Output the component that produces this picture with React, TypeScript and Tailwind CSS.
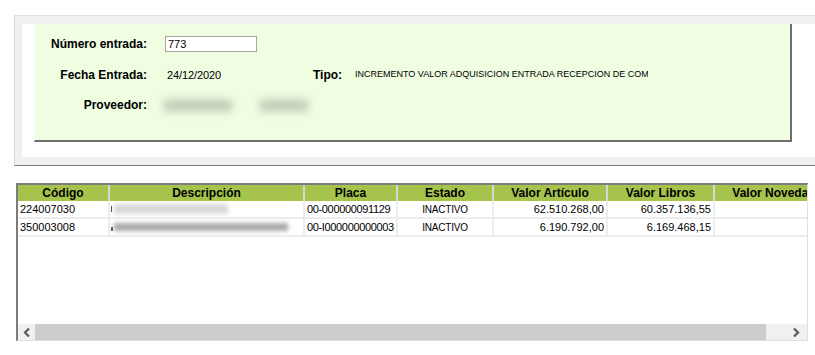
import React from "react";

const cols = [
  { w: "w-[90px]", label: "Código" },
  { w: "w-[195px]", label: "Descripción" },
  { w: "w-[93px]", label: "Placa" },
  { w: "w-[96px]", label: "Estado" },
  { w: "w-[114px]", label: "Valor Artículo" },
  { w: "w-[107px]", label: "Valor Libros" },
  { w: "w-[120px]", label: "Valor Novedad" },
];

function Chevron({ dir }: { dir: "l" | "r" }) {
  return (
    <svg width="8" height="9" viewBox="0 0 8 9">
      {dir === "l" ? (
        <path d="M6 0.5 L2 4.5 L6 8.5" fill="none" stroke="#5a5a5a" strokeWidth="2.2" />
      ) : (
        <path d="M2 0.5 L6 4.5 L2 8.5" fill="none" stroke="#5a5a5a" strokeWidth="2.2" />
      )}
    </svg>
  );
}

function Row({
  code,
  desc,
  placa,
  estado,
  va,
  vl,
}: {
  code: string;
  desc: React.ReactNode;
  placa: string;
  estado: string;
  va: string;
  vl: string;
}) {
  return (
    <div className="flex h-[18px] border-b-2 border-[#ececec] text-[11px] leading-[16px] text-black whitespace-nowrap">
      <div className="w-[90px] shrink-0 pl-[2px]">{code}</div>
      <div className="w-[195px] shrink-0 border-l-2 border-[#ececec] relative overflow-hidden">{desc}</div>
      <div className="w-[93px] shrink-0 border-l-2 border-[#ececec] pl-[2px] tracking-[-0.35px]">{placa}</div>
      <div className="w-[96px] shrink-0 border-l-2 border-[#ececec] text-center text-[10px] leading-[16px] pt-[1px] tracking-[-0.2px]">{estado}</div>
      <div className="w-[114px] shrink-0 border-l-2 border-[#ececec] text-right pr-[2px]">{va}</div>
      <div className="w-[107px] shrink-0 border-l-2 border-[#ececec] text-right pr-[2px]">{vl}</div>
      <div className="w-[120px] shrink-0 border-l-2 border-[#ececec]"></div>
    </div>
  );
}

export default function App() {
  return (
    <div className="w-[815px] h-[355px] bg-white overflow-hidden font-['Liberation_Sans',Arial,sans-serif] text-black">
      {/* top outer panel */}
      <div className="pt-[15px] pl-[14px]">
        <div className="w-[801px] h-[151px] border-t border-[#e2e2e2] border-l border-l-[#d8d8d8] border-b border-b-[#7a7a7a] bg-[#f0f0f0] pt-[8px] pb-[8px] pl-[7px] flex flex-col">
          <div className="flex-1 bg-white pl-[12px]">
            <div className="w-[758px] h-[118px] bg-[#effde1] border-r-2 border-b-2 border-[#6e6e6e] border-l border-l-[#f6fbf2] pt-[12px]">
              {/* row 1 */}
              <div className="flex items-center h-[16px]">
                <div className="w-[112px] text-right text-[12px] font-bold">Número entrada:</div>
                <div className="ml-[18px] w-[92px] h-[16px] bg-white border border-[#a8a8a8] text-[11px] leading-[14px] pl-[2px]">
                  773
                </div>
              </div>
              {/* row 2 */}
              <div className="flex items-center h-[16px] mt-[15px]">
                <div className="w-[112px] text-right text-[12px] font-bold">Fecha Entrada:</div>
                <div className="ml-[20px] w-[146px] text-[11px] tracking-[-0.1px]">24/12/2020</div>
                <div className="w-[42px] text-[12px] font-bold">Tipo:</div>
                <div className="w-[293px] overflow-hidden whitespace-nowrap text-[9px]">
                  INCREMENTO VALOR ADQUISICION ENTRADA RECEPCION DE COMPRA
                </div>
              </div>
              {/* row 3 */}
              <div className="flex items-center h-[16px] mt-[14px]">
                <div className="w-[112px] text-right text-[12px] font-bold">Proveedor:</div>
                <div className="ml-[17px] flex items-center gap-[28px]">
                  <div className="w-[68px] h-[11px] bg-[#bcc7b4] blur-[4px]"></div>
                  <div className="w-[48px] h-[11px] bg-[#bcc7b4] blur-[4px]"></div>
                </div>
              </div>
            </div>
          </div>
        </div>
      </div>

      {/* table */}
      <div className="ml-[16px] mt-[17px] w-[792px] h-[158px] border-t-2 border-l-2 border-[#7c7c7c] border-r border-r-[#e0e0e0] border-b border-b-[#e0e0e0] flex flex-col overflow-hidden">
        <div className="flex h-[16px] bg-[#a6c34c] shrink-0">
          {cols.map((c, i) => (
            <div
              key={c.label}
              className={`${c.w} shrink-0 text-center text-[12px] font-bold leading-[16px] whitespace-nowrap ${
                i === 0 ? "" : "border-l-2 border-[#d6d6d6]"
              }`}
            >
              {c.label}
            </div>
          ))}
        </div>
        <div className="flex-1 bg-white">
          <Row
            code="224007030"
            desc={
              <div className="flex items-center h-[16px] pl-[1px]">
                <div className="w-[1px] h-[6px] bg-[#444]"></div>
                <div className="ml-[2px] w-[114px] h-[10px] bg-[#d9d9d9] blur-[2px]"></div>
              </div>
            }
            placa="00-000000091129"
            estado="INACTIVO"
            va="62.510.268,00"
            vl="60.357.136,55"
          />
          <Row
            code="350003008"
            desc={
              <div className="flex items-center h-[16px] pl-[1px]">
                <div className="w-[2px] h-[4px] bg-[#555] mt-[3px]"></div>
                <div className="ml-[1px] w-[174px] h-[8px] bg-[#a9a9a9] blur-[2px]"></div>
              </div>
            }
            placa="00-I000000000003"
            estado="INACTIVO"
            va="6.190.792,00"
            vl="6.169.468,15"
          />
        </div>
        <div className="flex h-[16px] shrink-0">
          <div className="w-[17px] bg-[#f0f0f0] flex items-center justify-center">
            <Chevron dir="l" />
          </div>
          <div className="w-[731px] bg-[#cdcdcd]"></div>
          <div className="flex-1 bg-[#f0f0f0] flex items-center justify-end pr-[7px]">
            <Chevron dir="r" />
          </div>
        </div>
      </div>
    </div>
  );
}
